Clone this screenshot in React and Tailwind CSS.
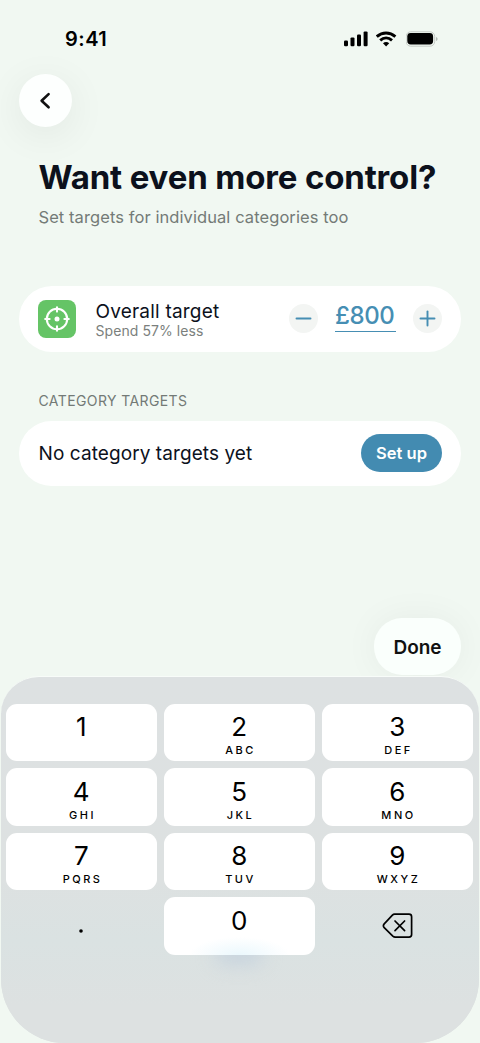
const KEYS = [
  { digit: '1', letters: '' },
  { digit: '2', letters: 'ABC' },
  { digit: '3', letters: 'DEF' },
  { digit: '4', letters: 'GHI' },
  { digit: '5', letters: 'JKL' },
  { digit: '6', letters: 'MNO' },
  { digit: '7', letters: 'PQRS' },
  { digit: '8', letters: 'TUV' },
  { digit: '9', letters: 'WXYZ' },
];

function StatusBar() {
  return (
    <div className="flex h-[74px] items-start justify-between pt-[26px] pr-[41px] pl-[65px]">
      <span className="text-[20px] leading-[26px] font-semibold tracking-[0.5px] text-black">9:41</span>
      <div className="flex h-[26px] items-center gap-[7px]">
        <svg width="25" height="16" viewBox="0 0 25 16" fill="black">
          <rect x="0" y="9.4" width="4" height="5.8" rx="1.2" />
          <rect x="6.5" y="6.4" width="4" height="8.8" rx="1.2" />
          <rect x="13" y="3.4" width="4" height="11.8" rx="1.2" />
          <rect x="19.6" y="0.4" width="4" height="14.8" rx="1.2" />
        </svg>
        <svg width="22" height="16" viewBox="0.8 0 22 16" fill="none" stroke="black" strokeWidth="2.9">
          <path d="M1.6 5.6C7.1 .7 14.5 .7 20.2 5.6" />
          <path d="M5 9.3C8.5 6.2 13.3 6.2 16.8 9.3" />
          <path d="M10.9 15.4L7.8 12.2C9.4 10.7 12.4 10.7 14 12.2Z" fill="black" stroke="none" />
        </svg>
        <svg width="33" height="16" viewBox="0.6 0 33 16" className="ml-[1px]">
          <rect x="0.7" y="0.8" width="28.6" height="14.4" rx="4.6" fill="none" stroke="#c6cbc6" />
          <rect x="1.9" y="2.1" width="25.8" height="11.4" rx="3.4" fill="black" />
          <path d="M30.8 6v4c1.8-.8 1.8-3.2 0-4z" fill="#a9aea9" />
        </svg>
      </div>
    </div>
  );
}

function TargetIcon() {
  return (
    <div className="flex size-[38px] items-center justify-center rounded-[8px] bg-[#65c466]">
      <svg width="28" height="28" viewBox="0 0 28 28" fill="none" stroke="white" strokeWidth="2.1" strokeLinecap="round">
        <circle cx="14" cy="14" r="10.2" />
        <circle cx="14" cy="14" r="2.5" fill="white" stroke="none" />
        <path d="M14 2.2v4.4M14 21.4v4.4M2.2 14h4.4M21.4 14h4.4" />
      </svg>
    </div>
  );
}

function StepButton({ plus }) {
  return (
    <button className="flex size-[29px] items-center justify-center rounded-full bg-[#f3f5f3]">
      <svg width="17" height="17" viewBox="0 0 17 17" stroke="#468eb3" strokeWidth="1.9" strokeLinecap="round">
        <path d="M1.5 8.5h14" />
        {plus && <path d="M8.5 1.5v14" />}
      </svg>
    </button>
  );
}

function Key({ digit, letters }) {
  return (
    <button className="flex h-[57.2px] flex-col items-center rounded-[11px] bg-white pt-[8.4px] text-black">
      <span className="text-[26px] leading-[30px]">{digit}</span>
      <span className="pl-[2.5px] text-[11px] leading-[16px] font-medium tracking-[2.5px]">{letters}</span>
    </button>
  );
}

function Keypad() {
  return (
    <div className="mx-px h-[367px] shrink-0 rounded-t-[38px] rounded-b-[64px] border-t border-[#f8fcf9] bg-[#dde2e1] bg-[linear-gradient(#dde1e2,#dde1e1_55%,#dae2e2_72%,#dde1e1_90%)] pt-[27px] pr-[6.5px] pl-[5px]">
      <div className="grid grid-cols-3 gap-x-[7.5px] gap-y-[7.3px]">
        {KEYS.map((key) => (
          <Key key={key.digit} {...key} />
        ))}
        <button className="flex items-center justify-center" aria-label="Decimal point">
          <svg width="6" height="6" viewBox="0 0 6 6" className="mt-[9px]">
            <circle cx="3" cy="3" r="1.8" />
          </svg>
        </button>
        <div className="relative grid">
          <div className="absolute bottom-[-10px] left-1/2 h-[22px] w-[48px] -translate-x-1/2 rounded-full bg-[#c8d4de] blur-[9px]" />
          <button className="relative flex h-[57.2px] flex-col items-center rounded-[11px] bg-white bg-[radial-gradient(ellipse_50px_18px_at_50%_100%,#ebf8fd,#ffffff)] pt-[8.4px] text-[26px] leading-[30px] text-black">
            0
          </button>
        </div>
        <button className="flex items-center justify-center" aria-label="Delete">
          <svg width="31" height="26" viewBox="0 0 31 26" fill="none" stroke="black" strokeWidth="1.7" strokeLinecap="round" strokeLinejoin="round">
            <path d="M12.6 1.2H27Q29.6 1.2 29.6 3.8V21.6Q29.6 24.2 27 24.2H13.2Q12 24.2 10.8 23.2L2.2 14.7Q.6 12.8 2.2 10.9L10.4 2.2Q11.4 1.2 12.6 1.2Z" />
            <path d="M13 8l9.6 9.6M22.6 8L13 17.6" />
          </svg>
        </button>
      </div>
    </div>
  );
}

export default function App() {
  return (
    <div className="flex h-[1043px] w-[480px] flex-col overflow-hidden bg-[#f1f8f2] font-['Inter',sans-serif] text-[#0c111c]">
      <StatusBar />

      <header className="px-[19px]">
        <button className="flex size-[53px] items-center justify-center rounded-full bg-[#fdfffe] pr-[2px] shadow-[0_8px_40px_rgba(0,0,0,0.07)]" aria-label="Back">
          <svg width="12" height="18" viewBox="0 0 12 18" fill="none" stroke="#111" strokeWidth="2.6" strokeLinecap="round" strokeLinejoin="round">
            <path d="M9.6 2.1L2.6 8.7l7 6.6" />
          </svg>
        </button>
        <div className="pt-[29px] pl-[19.5px] whitespace-nowrap">
          <h1 className="text-[33px] leading-[42px] font-bold tracking-[-0.15px]">Want even more control?</h1>
          <p className="mt-[8px] text-[16.5px] leading-[22px] tracking-[0.08px] text-[#747b77]">Set targets for individual categories too</p>
        </div>
      </header>

      <main className="px-[19px] pt-[58px] whitespace-nowrap">
        <section className="flex h-[65.5px] items-center rounded-full bg-white pr-[19px] pl-[19px]">
          <TargetIcon />
          <div className="ml-[19.5px] flex-1">
            <h2 className="text-[19px] leading-[23px] tracking-[0.2px]">Overall target</h2>
            <p className="text-[14px] leading-[15px] tracking-[0.07px] text-[#7b7f7d]">Spend 57% less</p>
          </div>
          <StepButton />
          <div className="mr-[17px] mb-[4px] ml-[17px] w-[61px] border-b-[1.5px] border-[#468eb3] pt-px pr-[2px] pb-px text-center text-[24px] leading-[28px] font-medium tracking-[-0.4px] text-[#468eb3]">£800</div>
          <StepButton plus />
        </section>

        <h3 className="mt-[39px] pl-[19.5px] text-[14px] leading-[20px] tracking-[0.4px] text-[#737a76]">CATEGORY TARGETS</h3>
        <section className="mt-[10px] flex h-[65.5px] items-center justify-between rounded-full bg-white pr-[19px] pl-[19.5px]">
          <p className="pt-[2px] text-[19px] leading-[26px] tracking-[0.08px]">No category targets yet</p>
          <button className="h-[38px] w-[81px] rounded-full bg-[#438bb1] text-[16.5px] leading-[38px] font-semibold text-white">Set up</button>
        </section>
      </main>

      <div className="mt-auto flex justify-end pr-[19px] pb-px">
        <button className="h-[57px] w-[87px] rounded-[28px] bg-[#fafffc] pt-[3px] text-[19px] font-semibold text-[#111] shadow-[0_0_36px_rgba(0,0,0,0.05)]">Done</button>
      </div>
      <Keypad />
    </div>
  );
}
